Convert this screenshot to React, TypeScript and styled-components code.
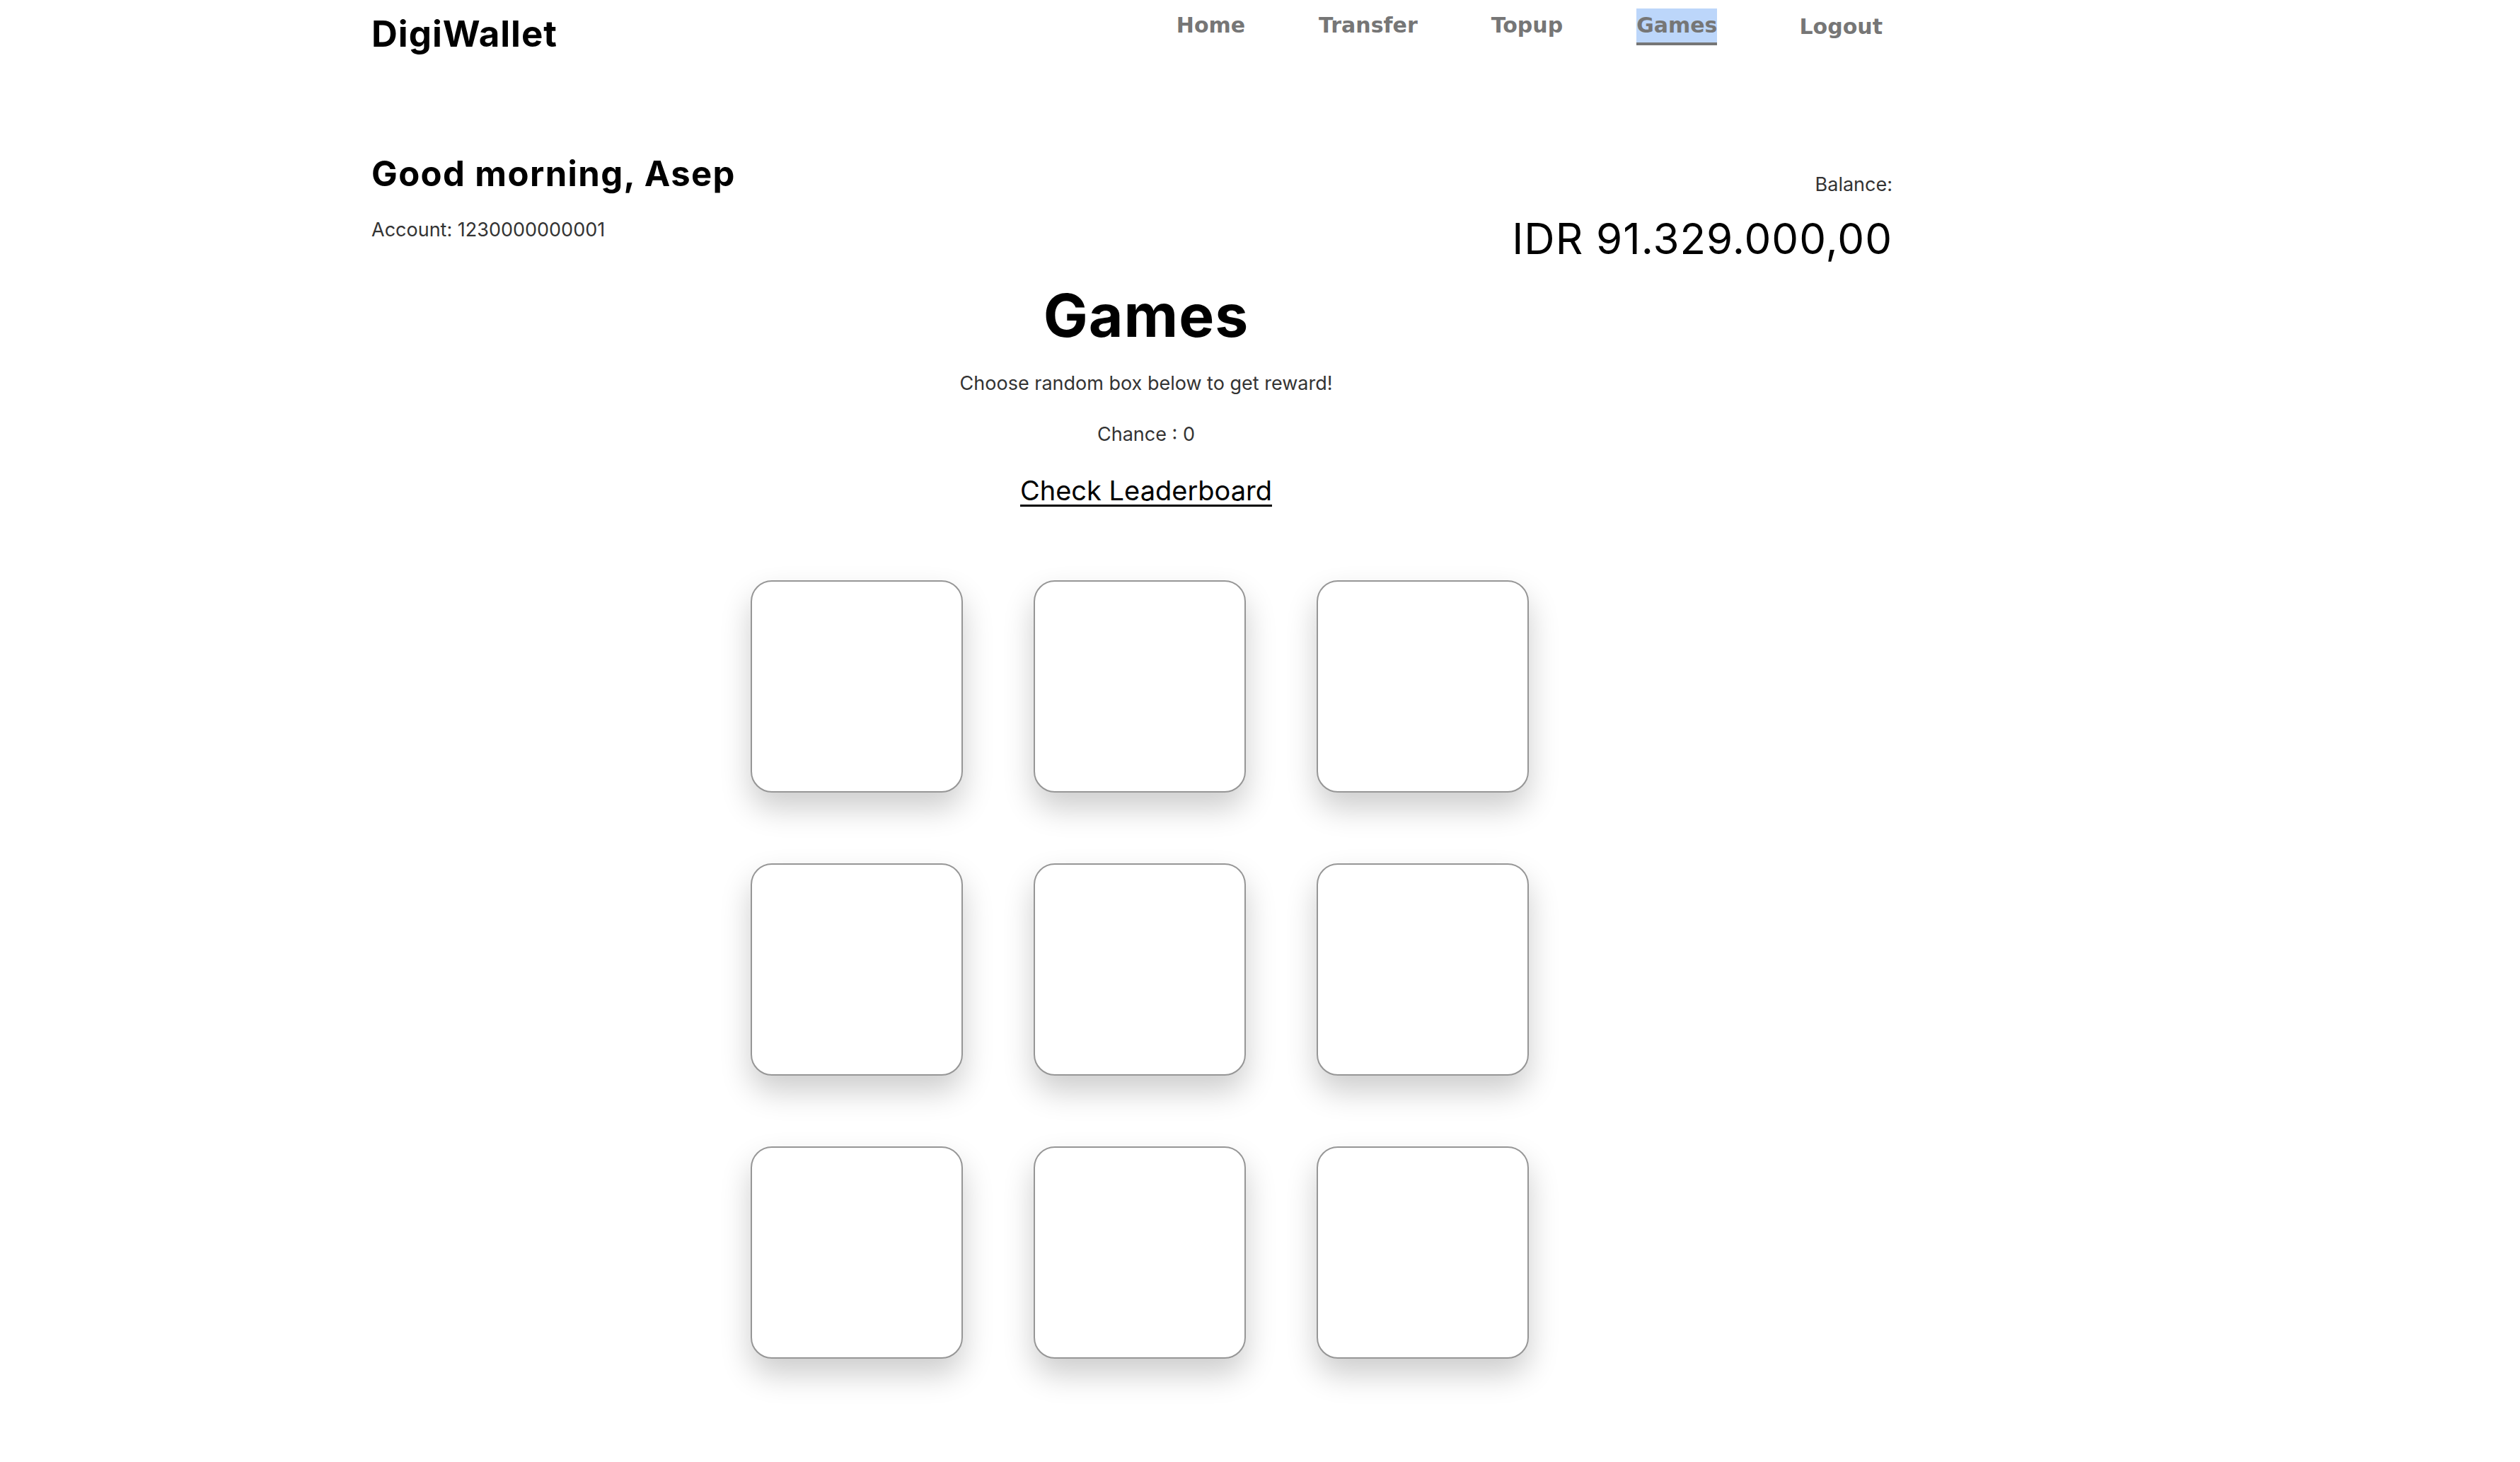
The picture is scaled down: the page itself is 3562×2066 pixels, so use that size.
import styled, { createGlobalStyle } from "styled-components";

const GlobalStyle = createGlobalStyle`
  html, body {
    margin: 0;
    padding: 0;
    background: #ffffff;
    font-family: Inter, "Noto Sans", sans-serif;
    color: #000;
  }
`;

const Page = styled.div`
  width: 2150px;
  padding-left: 525px;
  padding-bottom: 160px;
`;

const Header = styled.header`
  display: flex;
  justify-content: space-between;
  align-items: flex-start;
  height: 78px;
`;

const Brand = styled.div`
  margin-top: 18px;
  font-family: Inter, sans-serif;
  font-weight: 700;
  font-size: 51px;
  line-height: 60px;
  letter-spacing: 1px;
`;

const Nav = styled.nav`
  display: flex;
  gap: 104px;
  margin-top: 12px;
  margin-right: 14px;
`;

const NavLink = styled.a<{ $active?: boolean; $logout?: boolean }>`
  display: block;
  padding: 6px 0 4px;
  line-height: 36px;
  font-family: "DejaVu Sans", sans-serif;
  font-weight: 700;
  font-size: 30px;
  color: #767676;
  text-decoration: none;
  cursor: pointer;
  margin-left: ${(p) => (p.$logout ? "12px" : "0")};
  margin-top: ${(p) => (p.$logout ? "2px" : "0")};
  background: ${(p) => (p.$active ? "#bcd6fa" : "transparent")};
  border-bottom: 4px solid ${(p) => (p.$active ? "#767676" : "transparent")};
`;

const Summary = styled.section`
  display: flex;
  justify-content: space-between;
  align-items: flex-start;
  margin-top: 140px;
`;

const Greeting = styled.div`
  display: flex;
  flex-direction: column;
`;

const Hello = styled.h2`
  margin: 0;
  font-family: Inter, sans-serif;
  font-weight: 700;
  font-size: 49px;
  line-height: 56px;
  letter-spacing: 1.4px;
`;

const SmallText = styled.p`
  margin: 0;
  font-family: Inter, sans-serif;
  font-size: 27px;
  line-height: 34px;
  color: #333;
`;

const Account = styled(SmallText)`
  margin-top: 34px;
`;

const BalanceBox = styled.div`
  display: flex;
  flex-direction: column;
  align-items: flex-end;
  padding-top: 26px;
`;

const Amount = styled.div`
  margin-top: 24px;
  font-family: Inter, sans-serif;
  font-weight: 400;
  font-size: 60px;
  line-height: 70px;
  letter-spacing: 1px;
`;

const GameSection = styled.section`
  display: flex;
  flex-direction: column;
  align-items: center;
  padding-left: 40px;
`;

const Title = styled.h1`
  margin: 25px 0 0;
  font-family: Inter, sans-serif;
  font-weight: 700;
  font-size: 84px;
  line-height: 98px;
  letter-spacing: 1px;
`;

const Hint = styled(SmallText)`
  margin-top: 30px;
`;

const Chance = styled(SmallText)`
  margin-top: 38px;
`;

const Leaderboard = styled.a`
  margin-top: 39px;
  font-family: Inter, sans-serif;
  font-size: 38px;
  line-height: 47px;
  color: #000;
  text-decoration: underline;
  text-underline-offset: 6px;
  text-decoration-thickness: 3px;
  cursor: pointer;
`;

const BoxGrid = styled.div`
  display: grid;
  grid-template-columns: repeat(3, 300px);
  gap: 100px;
  margin-top: 103px;
  margin-right: 18px;
`;

const Box = styled.button`
  width: 300px;
  height: 300px;
  padding: 0;
  background: #fff;
  border: 2px solid #969696;
  border-radius: 30px;
  box-shadow: 0 22px 44px rgba(0, 0, 0, 0.2);
  cursor: pointer;
`;

const links = ["Home", "Transfer", "Topup", "Games"];

const App = () => {
  return (
    <>
      <GlobalStyle />
      <Page>
        <Header>
          <Brand>DigiWallet</Brand>
          <Nav>
            {links.map((l) => (
              <NavLink key={l} $active={l === "Games"}>
                {l}
              </NavLink>
            ))}
            <NavLink $logout>Logout</NavLink>
          </Nav>
        </Header>
        <Summary>
          <Greeting>
            <Hello>Good morning, Asep</Hello>
            <Account>Account: 1230000000001</Account>
          </Greeting>
          <BalanceBox>
            <SmallText>Balance:</SmallText>
            <Amount>IDR 91.329.000,00</Amount>
          </BalanceBox>
        </Summary>
        <GameSection>
          <Title>Games</Title>
          <Hint>Choose random box below to get reward!</Hint>
          <Chance>Chance : 0</Chance>
          <Leaderboard>Check Leaderboard</Leaderboard>
          <BoxGrid>
            {Array.from({ length: 9 }).map((_, i) => (
              <Box key={i} />
            ))}
          </BoxGrid>
        </GameSection>
      </Page>
    </>
  );
};

export default App;
